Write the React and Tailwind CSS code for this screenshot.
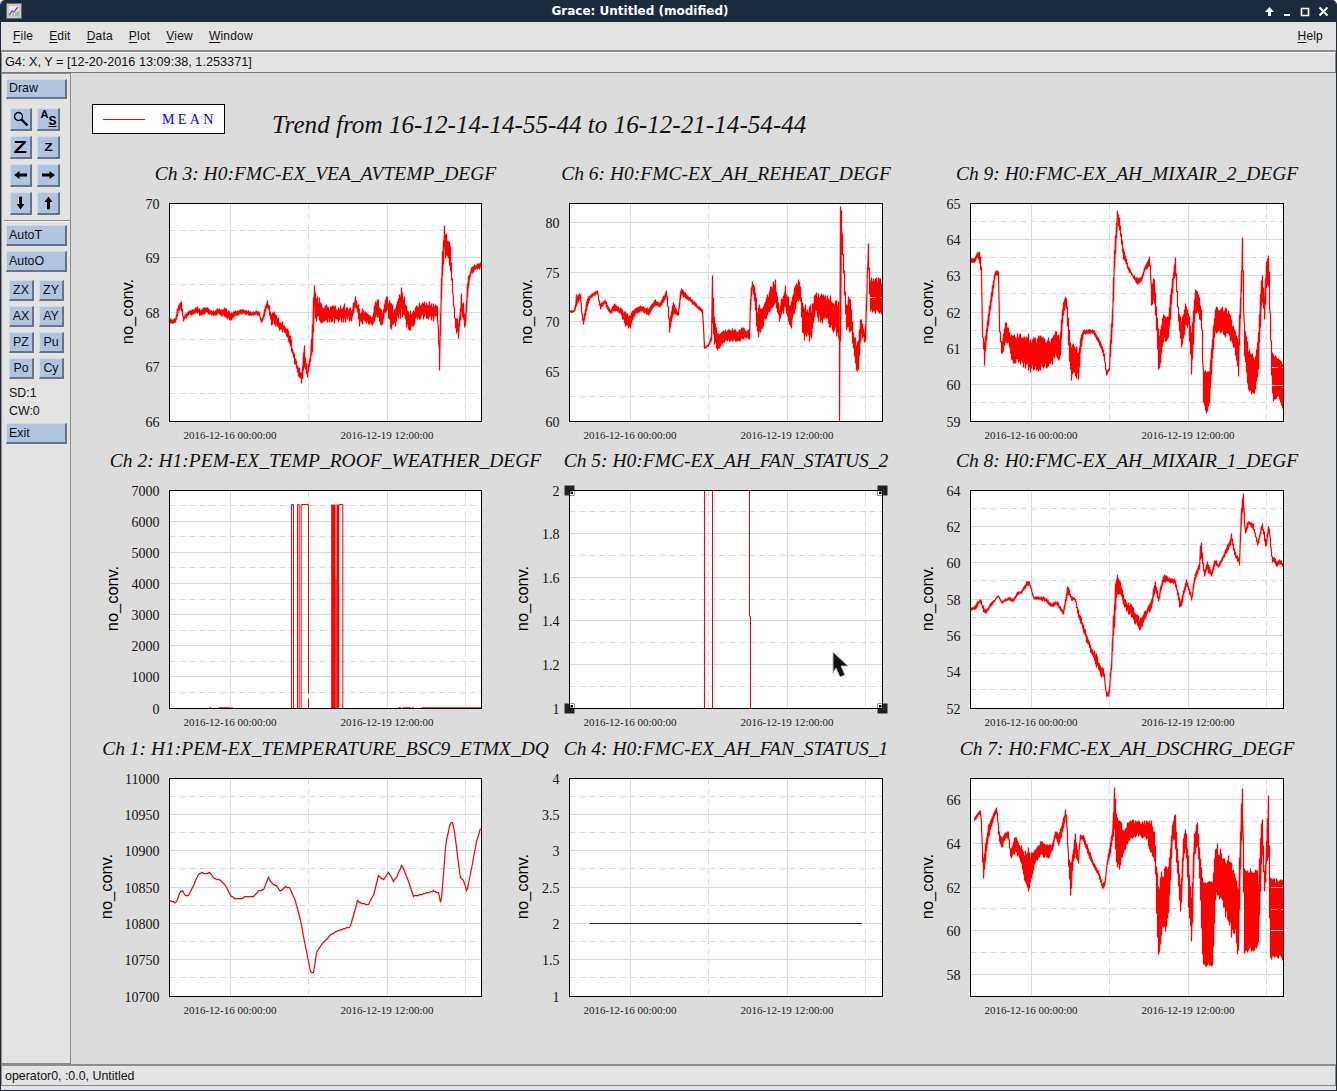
import React from 'react';

// traces are read off 3x crops: [x, top, bottom, spread], a small spread means nearly solid fill
const ch3 = [[208,470,490],[225,475,492],[235,430,460],[243,412,445],[250,470,485],[262,450,470],[290,437,462],[300,445,468],[320,440,462],[340,448,470],[370,437,470],[390,455,485],[410,448,468],[430,447,462],[450,453,468],[475,450,465],[485,478,495],[502,408,445],[512,450,500],[520,445,490],[535,470,515],[555,490,520],[570,520,560],[580,565,600],[590,600,640],[605,640,680],[612,550,625],[622,620,660],[632,575,600],[638,450,580],[642,352,460],[650,400,490],[670,430,490],[700,435,490],[730,430,490],[755,440,485],[767,405,440],[778,440,500],[800,450,490],[815,470,500],[830,400,470],[845,450,510],[860,400,450],[875,430,525],[890,430,490],[905,370,470],[920,420,510],[935,450,520],[950,430,480],[980,420,480],[1012,420,490],[1016,530,560],[1018,560,640],[1022,380,500],[1025,290,380],[1032,195,290],[1040,205,300],[1050,240,330],[1058,370,420],[1065,460,510],[1075,480,540],[1085,390,470],[1095,460,525],[1103,350,400],[1112,320,345],[1130,310,330],[1144,305,325]];
const ch6 = [[178,420,430],[195,420,425],[198,372,420],[212,370,375],[215,430,450],[221,440,468],[230,385,420],[240,375,385],[262,360,370],[270,400,418],[285,388,400],[300,420,435],[315,398,425],[330,412,430],[345,420,468],[360,430,482],[375,410,435],[395,405,425],[415,412,438],[435,388,405],[450,395,415],[470,358,380],[478,440,492],[490,395,435],[505,425,437],[512,350,380],[530,370,390],[560,400,415],[578,420,428],[583,530,536],[595,520,530],[604,495,510],[607,305,490],[612,420,520],[620,480,550],[640,480,520],[660,475,515],[680,475,520],[700,470,510],[718,480,512],[722,350,400],[728,328,360],[736,355,440],[742,400,510],[760,395,470],[775,360,440],[795,318,400],[808,410,460],[825,340,420],[842,400,495],[855,330,420],[870,328,390],[878,405,512],[890,400,515],[905,405,515],[915,355,440],[930,370,460],[955,370,470],[975,380,500],[986,395,510],[988,510,754,0],[990,105,620,0],[994,120,190],[1000,230,330],[1008,380,485],[1022,378,490],[1030,470,545],[1035,500,605],[1045,500,608],[1052,420,510],[1060,470,505],[1065,480,548],[1073,250,300],[1075,215,320],[1080,315,430],[1117,325,435,0.15]];
const ch9 = [[151,265,280],[165,262,278],[172,243,262],[180,245,290],[185,300,320],[187,490,500],[193,505,590],[197,490,530],[203,440,480],[215,355,395],[225,300,320],[236,300,315],[238,455,485],[245,525,570],[255,450,520],[265,470,520],[272,490,570],[285,485,590],[300,485,585],[315,485,595],[330,490,610],[345,500,610],[365,490,600],[385,500,600],[395,505,590],[405,470,560],[420,490,585],[428,400,450],[438,370,400],[445,420,540],[452,510,630],[465,510,630],[475,545,630],[482,490,545],[490,478,492],[520,478,490],[540,510,530],[552,540,560],[558,600,620],[568,595,600],[572,470,550],[578,390,470],[582,240,330],[592,118,150],[600,150,200],[610,230,270],[625,285,300],[640,318,322],[650,320,345],[665,320,335],[675,285,300],[690,255,290],[694,350,420],[702,300,390],[710,420,500],[716,480,620],[730,430,520],[745,430,510],[752,360,440],[760,300,330],[766,260,330],[775,410,460],[785,450,545],[795,395,480],[805,420,470],[815,460,630],[825,350,430],[835,370,440],[845,410,480],[850,600,700,0.05],[860,600,735,0.05],[868,600,700,0.05],[875,520,600],[885,410,490],[905,400,500],[925,415,505],[945,480,550],[955,490,630],[963,330,400],[968,160,300],[972,450,550],[985,530,670,0.1],[1005,560,675,0.1],[1015,485,600],[1025,295,390],[1033,370,450],[1040,245,350],[1047,245,380],[1053,500,600],[1058,550,700,0.1],[1075,560,680,0.05],[1090,580,730,0.05]];
const ch8 = [[151,413,422],[165,405,420],[180,382,400],[195,420,435],[215,395,405],[235,376,380],[245,392,400],[265,380,390],[280,385,397],[290,367,378],[305,360,370],[320,330,350],[327,325,345],[340,380,385],[375,380,395],[395,400,412],[410,390,405],[430,420,435],[443,342,375],[455,378,392],[465,380,390],[472,405,440],[485,445,470],[500,490,520],[515,530,555],[530,550,595],[545,590,630],[552,595,620],[558,670,682],[567,660,680],[570,610,640],[575,570,600],[578,470,520],[582,375,490],[590,292,380],[600,330,385],[615,385,420],[630,395,445],[650,425,470],[660,440,490],[680,415,435],[695,380,420],[705,325,370],[715,375,395],[730,310,340],[745,320,340],[765,322,345],[780,390,425],[800,325,345],[815,375,395],[825,305,330],[838,280,300],[843,185,260],[852,300,325],[862,270,310],[875,305,320],[885,260,285],[895,285,295],[915,240,260],[935,185,220],[945,245,265],[958,260,285],[965,80,150],[970,65,120],[975,175,200],[985,150,165],[1000,155,180],[1012,215,230],[1027,152,180],[1037,210,240],[1047,155,180],[1055,250,275],[1070,270,290],[1085,265,285],[1090,295,305]];
const ch1 = [[208,421],[228,428],[240,395],[247,392],[255,406],[265,405],[280,376],[295,342],[305,338],[315,340],[330,337],[342,355],[360,360],[375,375],[390,405],[405,415],[425,415],[435,409],[460,410],[475,392],[490,388],[505,352],[515,370],[530,378],[540,393],[555,380],[568,382],[585,420],[600,475],[615,555],[632,638],[640,636],[650,575],[665,553],[690,525],[710,513],[730,506],[750,500],[760,465],[772,422],[785,431],[805,432],[820,405],[835,347],[850,358],[865,337],[880,363],[890,350],[905,314],[920,350],[940,408],[960,404],[1000,392],[1015,398],[1022,432],[1028,368],[1037,250],[1050,190],[1058,185],[1065,230],[1080,350],[1090,360],[1100,394],[1115,320],[1130,240],[1143,200]].map(([x, y]) => [x, y, y]);
const ch7 = [[162,175,185],[175,155,165],[183,150,160],[186,250,300],[190,290,362],[197,240,300],[205,190,240],[220,160,180],[230,140,150],[236,210,240],[245,230,270],[255,212,235],[265,212,240],[272,270,300],[285,225,280],[300,250,300],[315,270,370],[325,260,400],[335,280,365],[345,260,310],[365,240,290],[385,255,300],[398,250,270],[405,210,230],[415,215,260],[425,190,230],[438,140,165],[445,280,320],[452,300,430],[458,280,320],[465,210,290],[475,290,310],[480,220,235],[490,225,245],[505,260,290],[520,305,320],[535,330,350],[548,370,392],[555,360,375],[560,310,320],[570,250,290],[578,200,240],[583,60,230],[590,160,345],[600,170,330],[610,200,290],[630,175,240],[650,180,230],[680,180,240],[690,165,280],[705,220,310],[710,310,510],[716,390,598,0.05],[725,320,520],[738,295,530],[748,290,430],[757,185,240],[765,145,260],[775,290,390],[782,380,470],[790,220,300],[798,200,270],[806,290,470],[815,400,565],[822,220,300],[832,175,260],[840,280,400],[848,360,620,0.05],[865,360,620,0.05],[878,360,620,0.05],[886,240,420],[900,260,430],[915,260,480],[930,290,530],[945,320,550],[955,350,600],[963,140,260],[967,60,180],[972,320,590],[985,325,575,0.05],[1000,325,575,0.05],[1015,330,560],[1026,135,280],[1034,360,410],[1040,200,310],[1045,105,300],[1050,350,600,0.05],[1068,355,600,0.05],[1085,355,595,0.05],[1090,355,640,0.05]];

function tracePath(points, zoomLeft, zoomTop, seed, spread) {
  let s = seed;
  const rand = () => {
    s = (s * 16807) % 2147483647;
    return (s % 1000) / 1000;
  };
  let d = '';
  const sx = (x) => (x - zoomLeft) / 3;
  const sy = (y) => Math.round((y - zoomTop) / 3) + 0.5;
  for (let i = 0; i < points.length - 1; i++) {
    const [x0, t0, b0, k0 = spread] = points[i];
    const [x1, t1, b1, k1 = spread] = points[i + 1];
    const from = Math.ceil(sx(x0));
    const to = Math.ceil(sx(x1));
    for (let px = from; px < to; px++) {
      const f = (px - sx(x0)) / Math.max(sx(x1) - sx(x0), 0.01);
      const top = t0 + (t1 - t0) * f;
      const bot = b0 + (b1 - b0) * f;
      const k = Math.min(k0, k1);
      const a = top + (bot - top) * rand() * k;
      const c = bot - (bot - top) * rand() * k;
      d += `${d ? 'L' : 'M'}${px + 0.5} ${sy(a)}L${px + 0.5} ${sy(c)}`;
    }
  }
  return d;
}

function Chart({ title, lo, hi, step, labels, width = 313, labelX, trace, zoomLeft, zoomTop, seed, spread = 0.35, children }) {
  const h = 218;
  const left = 69.5;
  const top = 43.5;
  const yOf = (v) => Math.floor(top + ((hi - v) / (hi - lo)) * h - 0.5) + 0.5;
  const majors = [];
  const minors = [];
  const n = Math.round((hi - lo) / (step / 2));
  // ch6 and ch7 have a top or bottom that is off the tick grid
  const start = Math.ceil(lo / (step / 2) - 1e-6) * (step / 2);
  for (let i = 0; i <= n; i++) {
    const v = start + (i * step) / 2;
    if (v > hi + 1e-6) break;
    if (Math.abs(v / step - Math.round(v / step)) < 1e-6) majors.push(v);
    else minors.push(v);
  }
  return (
    <svg width="400" height="287" className="block overflow-visible">
      <rect x={left} y={top} width={width} height={h} className="fill-white" />
      {majors.map((v) => (
        <line key={v} x1={left} x2={left + width} y1={yOf(v)} y2={yOf(v)} className="stroke-[#d9d9d9]" />
      ))}
      {minors.map((v) => (
        <line key={v} x1={left} x2={left + width} y1={yOf(v)} y2={yOf(v)} strokeDasharray="6 4" className="stroke-[#d9d9d9]" />
      ))}
      <line x1={left + 61} x2={left + 61} y1={top} y2={top + h} className="stroke-[#d9d9d9]" />
      <line x1={left + 218} x2={left + 218} y1={top} y2={top + h} className="stroke-[#d9d9d9]" />
      <line x1={left + 139} x2={left + 139} y1={top} y2={top + h} strokeDasharray="6 4" className="stroke-[#d9d9d9]" />
      <line x1={left + 296} x2={left + 296} y1={top} y2={top + h} strokeDasharray="6 4" className="stroke-[#d9d9d9]" />
      {trace && (
        <path
          d={tracePath(trace, zoomLeft, zoomTop, seed, spread)}
          transform="translate(69 43)"
          fill="none"
          strokeWidth="1.25"
          className="stroke-[#ff0000]"
        />
      )}
      {children}
      <rect x={left} y={top} width={width} height={h} fill="none" className="stroke-black" />
      <text x={left + width / 2} y={top - 24} textAnchor="middle" className="font-['Liberation_Serif',serif] italic text-[19.5px] fill-[#111]">
        {title}
      </text>
      {labels.map((v) => (
        <text key={v} x={left - 10} y={yOf(v) + 5} textAnchor="end" className="font-['Liberation_Serif',serif] text-[14px] fill-[#111]">
          {v}
        </text>
      ))}
      <text
        x={labelX}
        y={top + h / 2 - 1}
        textAnchor="middle"
        transform={`rotate(-90 ${labelX} ${top + h / 2 - 1})`}
        className="font-['Liberation_Sans',sans-serif] text-[16.4px] fill-black"
      >
        no_conv.
      </text>
      <text x={left + 60.5} y={top + h + 17.5} textAnchor="middle" className="font-['Liberation_Serif',serif] text-[11px] fill-[#222]">
        2016-12-16 00:00:00
      </text>
      <text x={left + 217.5} y={top + h + 17.5} textAnchor="middle" className="font-['Liberation_Serif',serif] text-[11px] fill-[#222]">
        2016-12-19 12:00:00
      </text>
    </svg>
  );
}

function Handle({ x, y, dx, dy }) {
  return (
    <g>
      <rect x={x - 5} y={y - 5} width="10" height="10" className="fill-[#222]" />
      <rect x={dx > 0 ? x + 0.5 : x - 4.5} y={dy > 0 ? y + 0.5 : y - 4.5} width="4" height="4" className="fill-white" />
      <rect x={dx > 0 ? x + 1 : x - 3.5} y={dy > 0 ? y + 1 : y - 3.5} width="2.5" height="2.5" className="fill-black" />
    </g>
  );
}

function Btn({ children, className = '' }) {
  return (
    <div className={`flex items-center bg-[#b0c4de] border-t border-l border-t-[#cfdbea] border-l-[#cfdbea] border-b-2 border-r-2 border-b-[#65748a] border-r-[#65748a] ${className}`}>
      {children}
    </div>
  );
}

function IconBtn({ children }) {
  return <Btn className="h-[23px] justify-center text-black">{children}</Btn>;
}

function Arrow({ className }) {
  return (
    <svg width="13" height="8" viewBox="0 0 13 8" className={className}>
      <path d="M0 4L5.5 0V2.5H13V5.5H5.5V8Z" fill="#000" />
    </svg>
  );
}

export default function App() {
  const smallBtn = ['ZX', 'ZY', 'AX', 'AY', 'PZ', 'Pu', 'Po', 'Cy'];
  return (
    <div className="w-[1337px] h-[1091px] flex flex-col overflow-hidden bg-[#e3e3e3] border-l border-r border-b border-[#1b2a3d] rounded-t-[5px] font-['Liberation_Sans',sans-serif] text-[12px] text-[#111]">
      {/* title bar */}
      <div className="h-[22px] shrink-0 flex items-center bg-[#1b2a3d] pl-[5px]">
        <svg width="16" height="16" viewBox="0 0 16 16" className="shrink-0">
          <rect x="0.5" y="0.5" width="15" height="15" fill="#c9c9c4" stroke="#6a6a66" />
          <rect x="3" y="3" width="10" height="10" fill="#e8e8f0" />
          <path d="M3 12L6 8L8 9L12 4" fill="none" stroke="#9050c0" strokeWidth="1.5" />
          <path d="M4 13V11M7 13V10M10 13V9M12 13V8" stroke="#40a040" />
        </svg>
        <div className="w-[1242px] pr-[6px] text-center text-white font-['DejaVu_Sans',sans-serif] font-bold text-[12px]">Grace: Untitled (modified)</div>
        <div className="flex items-center gap-[8px]">
          <svg width="11" height="11" viewBox="0 0 11 11"><path d="M5.5 1L10 6H7V10H4V6H1Z" fill="#fff" /></svg>
          <svg width="9" height="11" viewBox="0 0 9 11"><path d="M1 8H7V10H1Z" fill="#fff" /></svg>
          <svg width="10" height="11" viewBox="0 0 10 11"><path d="M1.5 2.5H8.5V9.5H1.5Z" fill="none" stroke="#fff" strokeWidth="1.6" /></svg>
          <svg width="11" height="11" viewBox="0 0 11 11"><path d="M1.5 1.5L9.5 9.5M9.5 1.5L1.5 9.5" fill="none" stroke="#fff" strokeWidth="2" /></svg>
        </div>
      </div>

      {/* menu bar */}
      <div className="h-[30px] shrink-0 flex items-center justify-between pl-[12px] pr-[13px] border-b-2 border-[#8c8c8c] tracking-[0.2px]">
        <div className="flex gap-[16px]">
          {['File', 'Edit', 'Data', 'Plot', 'View', 'Window'].map((m) => (
            <span key={m}>
              <span className="underline underline-offset-2">{m[0]}</span>
              {m.slice(1)}
            </span>
          ))}
        </div>
        <span>
          <span className="underline underline-offset-2">H</span>elp
        </span>
      </div>

      {/* locator */}
      <div className="h-[21px] shrink-0 flex items-center pl-[3px] text-[12.7px] border border-t-[#f4f4f4] border-l-[#8c8c8c] border-r-[#8c8c8c] border-b-[#777]">
        G4: X, Y = [12-20-2016 13:09:38, 1.253371]
      </div>

      <div className="flex-1 flex min-h-0">
        {/* tool panel */}
        <div className="w-[70px] shrink-0 flex flex-col pt-[5px] pl-[4px] text-[12.4px] border border-[#8c8c8c]">
          <Btn className="w-[61px] h-[20px] pl-[2px]">Draw</Btn>
          <div className="mt-[9px] ml-[4px] grid grid-cols-[22px_23px] gap-x-[5px] gap-y-[5px]">
            <IconBtn>
              <svg width="16" height="16" viewBox="0 0 16 16">
                <circle cx="5.5" cy="5.5" r="4" fill="none" stroke="#000" strokeWidth="1.4" />
                <path d="M8.5 8.5L14.5 14.5" stroke="#000" strokeWidth="2.4" />
              </svg>
            </IconBtn>
            <IconBtn>
              <span className="w-[15px] flex justify-between font-bold leading-none">
                <span className="text-[11px] -mt-[3px]">A</span>
                <span className="text-[12px] underline mt-[3px]">S</span>
              </span>
            </IconBtn>
            <IconBtn><span className="font-bold text-[17px] leading-none scale-x-[1.3]">Z</span></IconBtn>
            <IconBtn><span className="font-bold text-[11px] leading-none scale-x-[1.25]">Z</span></IconBtn>
            <IconBtn><Arrow /></IconBtn>
            <IconBtn><Arrow className="rotate-180" /></IconBtn>
            <IconBtn><Arrow className="-rotate-90" /></IconBtn>
            <IconBtn><Arrow className="rotate-90" /></IconBtn>
          </div>
          <div className="mt-[5px] -ml-[2px] mr-0 h-[2px] border-t border-[#8c8c8c] bg-[#f4f4f4]" />
          <Btn className="mt-[3px] w-[61px] h-[21px] pl-[2px]">AutoT</Btn>
          <Btn className="mt-[5px] w-[61px] h-[21px] pl-[2px]">AutoO</Btn>
          <div className="mt-[8px] ml-[3px] grid grid-cols-[25px_25px] gap-[5px]">
            {smallBtn.map((b) => (
              <Btn key={b} className="h-[21px] justify-center">{b}</Btn>
            ))}
          </div>
          <div className="mt-[5px] ml-[3px] leading-[18px]">SD:1</div>
          <div className="ml-[3px] leading-[18px]">CW:0</div>
          <Btn className="mt-[3px] w-[61px] h-[21px] pl-[2px]">Exit</Btn>
        </div>

        {/* canvas */}
        <div className="flex-1 bg-[#dcdcdc] pt-[31px] pl-[21px]">
          <div className="flex">
            <div className="w-[133px] h-[30px] flex items-center bg-white border border-black pl-[10px]">
              <div className="w-[42px] h-px bg-[#ff0000]" />
              <span className="ml-[17px] font-['Liberation_Serif',serif] text-[14px] tracking-[3.4px] text-[#0000ff]">MEAN</span>
            </div>
            <div className="ml-[47px] mt-[3px] font-['Liberation_Serif',serif] italic text-[25.15px] leading-[36px] text-[#111]">
              Trend from 16-12-14-14-55-44 to 16-12-21-14-54-44
            </div>
          </div>
          <div className="mt-[17px] ml-[8px] grid grid-cols-[400px_401px_400px] grid-rows-[287px_288px_287px]">
            <Chart title="Ch 3: H0:FMC-EX_VEA_AVTEMP_DEGF" lo={66} hi={70} step={1} labels={[70, 69, 68, 67, 66]} width={312} labelX={33} trace={ch3} zoomLeft={208} zoomTop={130} seed={11} />
            <Chart title="Ch 6: H0:FMC-EX_AH_REHEAT_DEGF" lo={60} hi={82} step={5} labels={[80, 75, 70, 65, 60]} labelX={32} trace={ch6} zoomLeft={178} zoomTop={100} seed={23} spread={0.25}>
              <line x1={370} x2={382} y1={137.5} y2={137.5} strokeDasharray="6 4" className="stroke-[#f0c8c8]" />
            </Chart>
            <Chart title="Ch 9: H0:FMC-EX_AH_MIXAIR_2_DEGF" lo={59} hi={65} step={1} labels={[65, 64, 63, 62, 61, 60, 59]} labelX={32} trace={ch9} zoomLeft={151} zoomTop={100} seed={37} spread={0.2}>
              <line x1={371} x2={382} y1={225.5} y2={225.5} className="stroke-[#f0d8d8]" />
              <line x1={371} x2={382} y1={207.5} y2={207.5} strokeDasharray="6 4" className="stroke-[#f0d8d8]" />
            </Chart>

            <Chart title="Ch 2: H1:PEM-EX_TEMP_ROOF_WEATHER_DEGF" lo={0} hi={7000} step={1000} labels={[7000, 6000, 5000, 4000, 3000, 2000, 1000, 0]} width={312} labelX={18}>
              <g transform="translate(69.5 43.5) scale(0.3333) translate(-208 -61)" fill="none" stroke="#ff0000" strokeWidth="3">
                <path d="M574 715V103H580V715M592 715V103H597V715M603 715V103H625V670M625 685V715" />
                <path d="M693 715V103H706V715Z" fill="#ff0000" stroke="none" />
                <path d="M709 715V103H717V715Z" fill="#ff0000" stroke="none" />
                <path d="M706 715V325H709V715Z" fill="#ff0000" stroke="none" />
                <path d="M717 103H728V715" />
                <path d="M327 713H333M355 713H390M393 713H398M895 713H903M907 713H932M936 713H941M963 713H1144" strokeWidth="4" />
              </g>
            </Chart>
            <Chart title="Ch 5: H0:FMC-EX_AH_FAN_STATUS_2" lo={1} hi={2} step={0.2} labels={[2, 1.8, 1.6, 1.4, 1.2, 1]} labelX={28}>
              <g transform="translate(69.5 43.5)" stroke="#ff0000" fill="none">
                <path d="M135 0V218M143 0V218M180 0V126H181V218" />
              </g>
              <Handle x={69.5} y={43.5} dx={1} dy={1} />
              <Handle x={382.5} y={43.5} dx={-1} dy={1} />
              <Handle x={69.5} y={261.5} dx={1} dy={-1} />
              <Handle x={382.5} y={261.5} dx={-1} dy={-1} />
              <path d="M333 205L348 219H341L345 228L340 230L336 221L333 226Z" fill="#111" stroke="#bbb" strokeWidth="1" />
            </Chart>
            <Chart title="Ch 8: H0:FMC-EX_AH_MIXAIR_1_DEGF" lo={52} hi={64} step={2} labels={[64, 62, 60, 58, 56, 54, 52]} labelX={32} trace={ch8} zoomLeft={151} zoomTop={61} seed={41} />

            <Chart title="Ch 1: H1:PEM-EX_TEMPERATURE_BSC9_ETMX_DQ" lo={10700} hi={11000} step={50} labels={[11000, 10950, 10900, 10850, 10800, 10750, 10700]} width={312} labelX={12} trace={ch1} zoomLeft={208} zoomTop={55} seed={53} />
            <Chart title="Ch 4: H0:FMC-EX_AH_FAN_STATUS_1" lo={1} hi={4} step={0.5} labels={[4, 3.5, 3, 2.5, 2, 1.5, 1]} labelX={28}>
              <line x1={90} x2={362} y1={188.5} y2={188.5} className="stroke-[#222]" />
            </Chart>
            <Chart title="Ch 7: H0:FMC-EX_AH_DSCHRG_DEGF" lo={57} hi={67} step={2} labels={[66, 64, 62, 60, 58]} labelX={32} trace={ch7} zoomLeft={151} zoomTop={55} seed={67} spread={0.2}>
              <line x1={370} x2={382} y1={152.5} y2={152.5} className="stroke-[#f0d8d8]" />
              <line x1={370} x2={382} y1={195.5} y2={195.5} className="stroke-[#f0d8d8]" />
              <line x1={370} x2={382} y1={174.5} y2={174.5} strokeDasharray="6 4" className="stroke-[#f0d8d8]" />
            </Chart>
          </div>
        </div>
      </div>

      {/* status bar */}
      <div className="h-[26px] shrink-0 border-t-2 border-[#8c8c8c]">
        <div className="h-[20px] flex items-center pl-[3px] pt-[1px] text-[12.4px] border-b border-l border-r border-[#8c8c8c]">operator0, :0.0, Untitled</div>
      </div>
    </div>
  );
}
